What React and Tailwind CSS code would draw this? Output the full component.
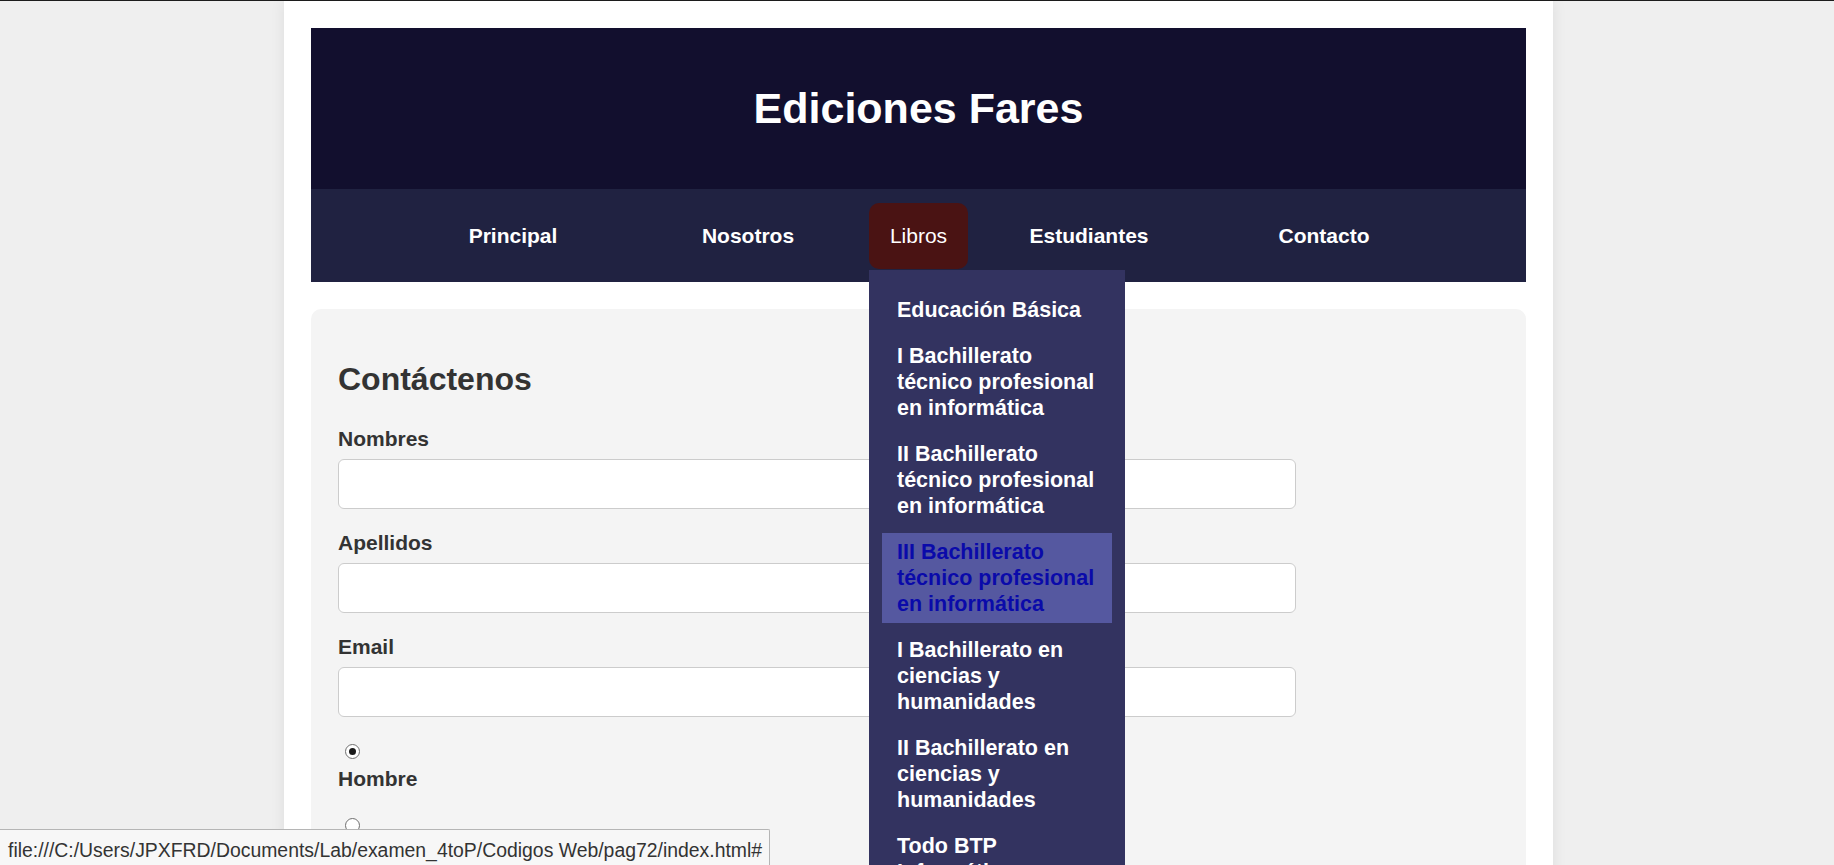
const menu = [
  'Educación Básica',
  'I Bachillerato técnico profesional en informática',
  'II Bachillerato técnico profesional en informática',
  'III Bachillerato técnico profesional en informática',
  'I Bachillerato en ciencias y humanidades',
  'II Bachillerato en ciencias y humanidades',
  'Todo BTP Informática',
  'Todo BCH',
];

function Field({ label }) {
  return (
    <div>
      <label className="block text-[21px] leading-[24px] font-bold text-[#333] mb-[8px]">{label}</label>
      <input type="text" className="block w-[958px] h-[50px] bg-white border border-[#cccccc] rounded-[6px] mb-[22px] outline-none" />
    </div>
  );
}

function Radio({ checked, label }) {
  return (
    <div className="pt-[5px]">
      <span className="ml-[7px] flex items-center justify-center w-[15px] h-[15px] rounded-full border-[1.5px] border-[#6f6f6f] bg-white">
        {checked && <span className="w-[7px] h-[7px] rounded-full bg-[#1a1a1a]" />}
      </span>
      <label className="block mt-[8px] text-[21px] leading-[24px] font-bold text-[#333]">{label}</label>
    </div>
  );
}

export default function App() {
  return (
    <div className="h-[865px] overflow-hidden bg-[#efefef] border-t border-[#1c1c1c] font-['Liberation_Sans',Arial,sans-serif]">
      <div className="ml-[284px] w-[1269px] min-h-[900px] bg-white px-[27px] pt-[27px] shadow-[0_0_14px_rgba(0,0,0,0.08)]">
        {/* Header */}
        <header className="h-[161px] bg-[#120f2e] flex items-center justify-center">
          <h1 className="text-[43px] font-bold text-white">Ediciones Fares</h1>
        </header>

        {/* Nav */}
        <nav className="h-[93px] bg-[#202241]">
          <ul className="h-full flex items-center justify-center text-[21px] text-white">
            <li className="w-[228px] text-center font-bold">Principal</li>
            <li className="w-[242px] text-center font-bold">Nosotros</li>
            <li className="relative w-[99px]">
              <div className="h-[66px] rounded-[10px] bg-[#4a1313] flex items-center justify-center">Libros</div>
              <ul className="absolute left-0 top-[67px] z-10 w-[256px] bg-[#333360] pt-[21px] px-[13px] pb-[12px] flex flex-col gap-[8px]">
                {menu.map((m, i) => (
                  <li key={m} className={`px-[15px] py-[6px] text-[21.5px] leading-[26px] font-bold ${i === 3 ? 'bg-[#5558a0] text-[#0a0aaa]' : 'text-white'}`}>
                    {m}
                  </li>
                ))}
              </ul>
            </li>
            <li className="w-[242px] text-center font-bold">Estudiantes</li>
            <li className="w-[228px] text-center font-bold">Contacto</li>
          </ul>
        </nav>

        {/* Contact form */}
        <section className="mt-[27px] bg-[#f4f4f4] rounded-[10px] px-[27px] pt-[52px] pb-[40px]">
          <h2 className="text-[32px] leading-[37px] font-bold text-[#333] mb-[29px]">Contáctenos</h2>
          <Field label="Nombres" />
          <Field label="Apellidos" />
          <Field label="Email" />
          <Radio checked label="Hombre" />
          <div className="mt-[22px]">
            <Radio label="Mujer" />
          </div>
        </section>
      </div>

      {/* Browser status bubble */}
      <div className="fixed left-0 bottom-0 w-[770px] h-[36px] bg-[#f7f7f7] border-t border-r border-[#b5b5b5] rounded-tr-[2px] pl-[8px] pt-[8px] text-[19.4px] leading-[24px] text-[#333] whitespace-nowrap">
        file:///C:/Users/JPXFRD/Documents/Lab/examen_4toP/Codigos Web/pag72/index.html#
      </div>
    </div>
  );
}
